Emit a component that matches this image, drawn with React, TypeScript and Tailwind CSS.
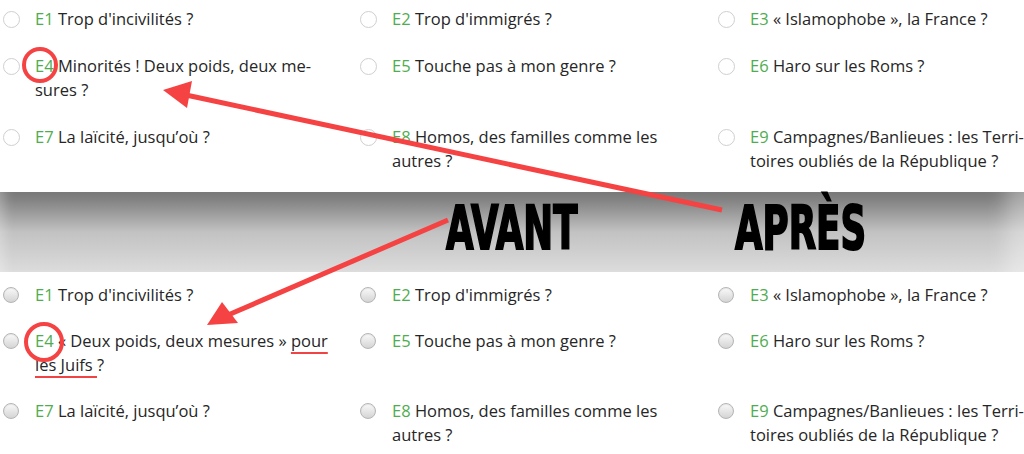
import React from 'react';

type Item = { code: string; lines: React.ReactNode[] };

const before: Item[] = [
  { code: 'E1', lines: ["Trop d'incivilités ?"] },
  { code: 'E2', lines: ["Trop d'immigrés ?"] },
  { code: 'E3', lines: ['« Islamophobe », la France ?'] },
  { code: 'E4', lines: ['Minorités ! Deux poids, deux me-', 'sures ?'] },
  { code: 'E5', lines: ['Touche pas à mon genre ?'] },
  { code: 'E6', lines: ['Haro sur les Roms ?'] },
  { code: 'E7', lines: ['La laïcité, jusqu’où ?'] },
  { code: 'E8', lines: ['Homos, des familles comme les', 'autres ?'] },
  { code: 'E9', lines: ['Campagnes/Banlieues : les Terri-', 'toires oubliés de la République ?'] },
];

const after: Item[] = [
  { code: 'E1', lines: ["Trop d'incivilités ?"] },
  { code: 'E2', lines: ["Trop d'immigrés ?"] },
  { code: 'E3', lines: ['« Islamophobe », la France ?'] },
  {
    code: 'E4',
    lines: [
      <>
        « Deux poids, deux mesures »{' '}
        <span className="underline decoration-[#f04444] decoration-2 underline-offset-[5px]">pour</span>
      </>,
      <>
        <span className="underline decoration-[#f04444] decoration-2 underline-offset-[5px]">les Juifs&nbsp;</span>?
      </>,
    ],
  },
  { code: 'E5', lines: ['Touche pas à mon genre ?'] },
  { code: 'E6', lines: ['Haro sur les Roms ?'] },
  { code: 'E7', lines: ['La laïcité, jusqu’où ?'] },
  { code: 'E8', lines: ['Homos, des familles comme les', 'autres ?'] },
  { code: 'E9', lines: ['Campagnes/Banlieues : les Terri-', 'toires oubliés de la République ?'] },
];

// Radio + label, like the theme list
function Choice({ item, glossy }: { item: Item; glossy?: boolean }) {
  return (
    <label className="flex items-start">
      <span className="w-[35px] shrink-0 pt-[4px] pl-[3px]">
        {glossy ? (
          <span className="block h-[16px] w-[16px] rounded-full border border-[#b5b5b5] bg-gradient-to-b from-[#fafafa] to-[#d4d4d4] shadow-[inset_0_1px_1px_rgba(0,0,0,0.08)]" />
        ) : (
          <span className="block h-[17px] w-[17px] rounded-full border border-[#cfcfcf] bg-white" />
        )}
      </span>
      <span className="text-[16.5px] leading-6 text-[#262626]">
        {item.lines.map((line, i) => (
          <span key={i} className="block whitespace-nowrap">
            {i === 0 && <span className="text-[#4fad4f]">{item.code} </span>}
            {line}
          </span>
        ))}
      </span>
    </label>
  );
}

function ChoiceGrid({ items, glossy, className }: { items: Item[]; glossy?: boolean; className?: string }) {
  return (
    <div className={`grid grid-cols-[357px_358px_309px] ${className ?? ''}`}>
      {items.map((item) => (
        <Choice key={item.code} item={item} glossy={glossy} />
      ))}
    </div>
  );
}

export default function App() {
  return (
    <div className="relative h-[454px] w-[1024px] overflow-hidden bg-white font-['Open_Sans',sans-serif]">
      {/* Après (current version) */}
      <div className="h-[192px] bg-white pt-[7px]">
        <ChoiceGrid items={before} className="gap-y-[23px]" />
      </div>

      {/* Shadow band with labels */}
      <div className="flex h-[80px] items-start bg-gradient-to-b from-[#747474] via-[#c2c2c2] to-[#dcdcdc] pl-[446px] pt-[6px] shadow-[inset_14px_0_12px_-10px_rgba(255,255,255,0.3),inset_-30px_0_20px_-12px_rgba(255,255,255,0.35)]">
        <span className="w-[289px] origin-left scale-x-[0.66] font-['DejaVu_Sans_Condensed',sans-serif] text-[60px] leading-[60px] font-bold text-black [-webkit-text-stroke:2px_black]">
          AVANT
        </span>
        <span className="origin-left scale-x-[0.66] font-['DejaVu_Sans_Condensed',sans-serif] text-[60px] leading-[60px] font-bold text-black [-webkit-text-stroke:2px_black]">
          APRÈS
        </span>
      </div>

      {/* Avant (old version) */}
      <div className="bg-white pt-[11px]">
        <ChoiceGrid items={after} glossy className="gap-y-[22px]" />
      </div>

      {/* Annotations */}
      <svg className="pointer-events-none absolute inset-0" width="1024" height="454" viewBox="0 0 1024 454">
        <g fill="none" stroke="#f54242" strokeWidth="4">
          <circle cx="40" cy="65" r="16" />
          <circle cx="44" cy="342" r="18" />
        </g>
        <g stroke="#f54242" strokeWidth="5" strokeLinecap="butt">
          <line x1="722" y1="210" x2="186" y2="95" />
          <line x1="448" y1="220" x2="228" y2="315" />
        </g>
        <g fill="#f54242">
          <polygon points="163,90 192,81 187,108" />
          <polygon points="207,325 222,302 238,323" />
        </g>
      </svg>
    </div>
  );
}
